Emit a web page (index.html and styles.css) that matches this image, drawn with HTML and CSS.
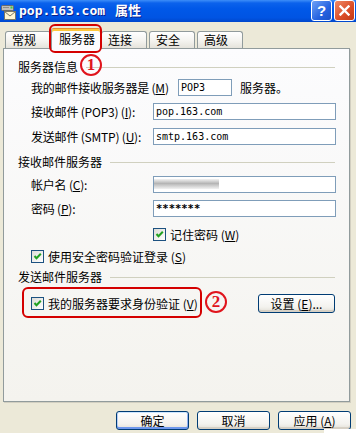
FILE: index.html
```html
<!DOCTYPE html>
<html lang="zh-CN">
<head>
    <meta charset="UTF-8">
    <title>pop.163.com 属性</title>
    <link rel="stylesheet" href="styles.css">
</head>
<body>

<div class="window">

    <!-- Title bar -->
    <div class="titlebar">
        <svg class="app-icon" width="16" height="16" viewBox="0 0 16 16">
            <rect x="0.5" y="1.5" width="12" height="5" rx="1" fill="#BDBDBD" stroke="#6B6B6B"/>
            <rect x="2" y="3" width="6" height="1" fill="#8C8C8C"/>
            <rect x="9.5" y="2.5" width="2" height="2" fill="#39D439"/>
            <rect x="3.5" y="7.5" width="11" height="8" fill="#FFF6D2" stroke="#77776A"/>
            <path d="M3.5 7.5 L9 12 L14.5 7.5" fill="none" stroke="#77776A"/>
        </svg>
        <span class="title">pop.163.com 属性</span>
        <div class="caption-btns">
            <span class="cap-btn help">?</span>
            <span class="cap-btn close">
                <svg width="11" height="11" viewBox="0 0 11 11">
                    <path d="M1.5 1.5 L9.5 9.5 M9.5 1.5 L1.5 9.5" stroke="#fff" stroke-width="2.4" stroke-linecap="square"/>
                </svg>
            </span>
        </div>
    </div>

    <!-- Tabs -->
    <div class="tabs">
        <div class="tab">常规</div>
        <div class="tab active">服务器</div>
        <div class="tab">连接</div>
        <div class="tab">安全</div>
        <div class="tab">高级</div>
    </div>

    <div class="panel">
        <div class="group-head"><span>服务器信息</span><i class="rule"></i></div>

        <div class="field first">
            <span class="label wide">我的邮件接收服务器是 (<u>M</u>)</span>
            <div class="input short">POP3</div>
            <span class="after">服务器。</span>
        </div>
        <div class="field gap7">
            <span class="label">接收邮件 (POP3) (<u>I</u>):</span>
            <div class="input">pop.163.com</div>
        </div>
        <div class="field gap8">
            <span class="label">发送邮件 (SMTP) (<u>U</u>):</span>
            <div class="input">smtp.163.com</div>
        </div>

        <div class="group-head gap11"><span>接收邮件服务器</span><i class="rule"></i></div>

        <div class="field gap8">
            <span class="label">帐户名 (<u>C</u>):</span>
            <div class="input"><span class="blur"></span></div>
        </div>
        <div class="field gap7">
            <span class="label">密码 (<u>P</u>):</span>
            <div class="input secret">*******</div>
        </div>
        <div class="check-row indent gap11">
            <span class="checkbox"><svg width="11" height="11" viewBox="0 0 11 11"><path d="M2.5 5 L4.5 7.2 L8.8 2.8" fill="none" stroke="#21A121" stroke-width="2"/></svg></span>
            <span>记住密码 (<u>W</u>)</span>
        </div>
        <div class="check-row gap9">
            <span class="checkbox"><svg width="11" height="11" viewBox="0 0 11 11"><path d="M2.5 5 L4.5 7.2 L8.8 2.8" fill="none" stroke="#21A121" stroke-width="2"/></svg></span>
            <span>使用安全密码验证登录 (<u>S</u>)</span>
        </div>

        <div class="group-head gap8"><span>发送邮件服务器</span><i class="rule"></i></div>

        <div class="check-row auth gap11">
            <span class="checkbox"><svg width="11" height="11" viewBox="0 0 11 11"><path d="M2.5 5 L4.5 7.2 L8.8 2.8" fill="none" stroke="#21A121" stroke-width="2"/></svg></span>
            <span>我的服务器要求身份验证 (<u>V</u>)</span>
            <button class="btn settings">设置 (<u>E</u>)...</button>
        </div>
    </div>

    <div class="actions">
        <button class="btn default">确定</button>
        <button class="btn">取消</button>
        <button class="btn">应用 (<u>A</u>)</button>
    </div>

    <!-- red annotations -->
    <span class="mark tab-mark"></span>
    <span class="mark auth-mark"></span>
    <span class="circle c1">1</span>
    <span class="circle c2">2</span>
    <span class="corner"></span>
</div>

</body>
</html>
```

FILE: styles.css
```css
body {
    margin: 0;
    padding: 0;
    font-family: "Noto Sans CJK SC", sans-serif;
    font-size: 12px;
    color: #000;
}
.window {
    position: relative;
    width: 356px;
    height: 433px;
    background-color: #ECE9D8;
    overflow: hidden;
}
.titlebar {
    height: 22px;
    display: flex;
    align-items: center;
    padding-left: 1px;
    background: linear-gradient(#3D8EF8 0, #0B62EC 3px, #0058E8 40%, #0054E3 80%, #0047CC 100%);
}
.app-icon {
    margin-right: 2px;
    margin-top: 1px;
}
.title {
    color: #fff;
    font-family: "DejaVu Sans Mono", "Noto Sans CJK SC", monospace;
    font-weight: bold;
    font-size: 13px;
    line-height: 16px;
    word-spacing: 2px;
    text-shadow: 1px 1px 0 #0A1E8C;
}
.caption-btns {
    display: flex;
    gap: 2px;
    margin-left: auto;
    margin-right: 1px;
    align-self: flex-start;
}
.cap-btn {
    width: 21px;
    height: 21px;
    box-sizing: border-box;
    border: 1px solid #fff;
    border-radius: 3px;
    display: flex;
    align-items: center;
    justify-content: center;
}
.help {
    background: linear-gradient(135deg, #6EA2F7, #2663E0 60%, #1A51C9);
    color: #fff;
    font-family: "Liberation Sans", sans-serif;
    font-weight: bold;
    font-size: 15px;
}
.close {
    background: linear-gradient(135deg, #EE8A68, #DB4C26 60%, #C13A17);
}

/* tabs */
.tabs {
    display: flex;
    align-items: flex-end;
    gap: 2px;
    height: 20px;
    margin: 6px 0 0 5px;
    position: relative;
    z-index: 1;
}
.tab {
    width: 46px;
    height: 17px;
    box-sizing: border-box;
    border: 1px solid #919B9C;
    border-bottom: none;
    border-radius: 3px 3px 0 0;
    background: linear-gradient(#FFFFFF, #F4F3EF 55%, #E5E3DB);
    padding-left: 6px;
    line-height: 16px;
}
.tab.active {
    width: 50px;
    height: 21px;
    margin: 0 -2px -1px;
    padding: 2px 0 0 7px;
    border-top: 1px solid #E68B2C;
    box-shadow: inset 0 2px 0 #FFC83C;
    background: #FCFCFE;
}

/* panel */
.panel {
    width: 347px;
    height: 354px;
    box-sizing: border-box;
    margin-left: 3px;
    padding: 12px 13px 0 14px;
    border: 1px solid #919B9C;
    background: linear-gradient(#FCFCFE, #F4F3EE);
    box-shadow: 1px 1px 0 #D2CFC1;
}
.group-head {
    display: flex;
    align-items: center;
    height: 12px;
    line-height: 12px;
}
.rule {
    flex: 1;
    height: 1px;
    margin-left: 8px;
    margin-right: 1px;
    background-color: #D0D0BF;
}
.field {
    display: flex;
    align-items: center;
    height: 17px;
    margin-left: 13px;
}
.field.first {
    margin-top: 6px;
}
.gap7 { margin-top: 7px; }
.gap8 { margin-top: 8px; }
.gap9 { margin-top: 9px; }
.gap11 { margin-top: 11px; }
.label {
    width: 122px;
    flex-shrink: 0;
    white-space: nowrap;
    letter-spacing: -0.2px;
}
.label.wide {
    width: 147px;
}
.input {
    width: 185px;
    height: 17px;
    box-sizing: border-box;
    border: 1px solid #7F9DB9;
    background-color: #fff;
    padding-left: 2px;
    font-family: "DejaVu Sans Mono", monospace;
    font-size: 10px;
    line-height: 15px;
    overflow: hidden;
}
.input.short {
    width: 54px;
}
.input.secret {
    font-weight: bold;
    font-size: 10.5px;
}
.after {
    margin-left: 8px;
}
.blur {
    display: block;
    width: 66px;
    height: 10px;
    margin: 2px 0 0 -3px;
    background: linear-gradient(#F2F2F2, #B5B5B5 45%, #C6C6C6 60%, #F2F2F2);
    filter: blur(0.7px);
}
.check-row {
    display: flex;
    align-items: center;
    gap: 4px;
    height: 13px;
    margin-left: 13px;
}
.check-row.indent {
    margin-left: 135px;
}
.check-row.auth {
    height: 19px;
}
.checkbox {
    width: 13px;
    height: 13px;
    box-sizing: border-box;
    border: 1px solid #1C5180;
    background: linear-gradient(135deg, #DCDCD7, #FFFFFF);
    display: flex;
    align-items: center;
    justify-content: center;
}

/* buttons */
.btn {
    height: 19px;
    padding: 0;
    border: 1px solid #003C74;
    border-radius: 3px;
    background: linear-gradient(#FFFFFF, #F3F2EE 70%, #E2DFD6);
    box-shadow: inset 0 -2px 0 #D6D0C5;
    font-family: "Noto Sans CJK SC", sans-serif;
    font-size: 12px;
    line-height: 16px;
    color: #000;
}
.settings {
    width: 77px;
    margin-left: auto;
    margin-right: 1px;
}
.btn.default {
    box-shadow: inset 0 1px 0 #CEE7FF, inset 0 -2px 0 #6E97EC, inset 1px 0 0 #B7CDF6, inset -1px 0 0 #93B1F0;
}
.actions {
    display: flex;
    justify-content: flex-end;
    gap: 8px;
    margin: 9px 5px 0 0;
}
.actions .btn {
    width: 73px;
}

/* annotations */
.mark {
    position: absolute;
    box-sizing: border-box;
    border: 2px solid #D40000;
    border-radius: 6px;
}
.tab-mark {
    left: 49px;
    top: 24px;
    width: 53px;
    height: 29px;
    z-index: 2;
}
.auth-mark {
    left: 22px;
    top: 287px;
    width: 180px;
    height: 31px;
}
.circle {
    position: absolute;
    width: 22px;
    height: 22px;
    box-sizing: border-box;
    border: 2.5px solid #E0141C;
    border-radius: 50%;
    color: #E0141C;
    font-family: "Liberation Serif", serif;
    font-weight: bold;
    font-size: 17px;
    line-height: 17px;
    text-align: center;
}
.c1 {
    left: 80px;
    top: 54px;
}
.c2 {
    left: 205px;
    top: 291px;
}
.corner {
    position: absolute;
    right: 0;
    bottom: 0;
    width: 32px;
    height: 4px;
    background-color: #fff;
}
```
